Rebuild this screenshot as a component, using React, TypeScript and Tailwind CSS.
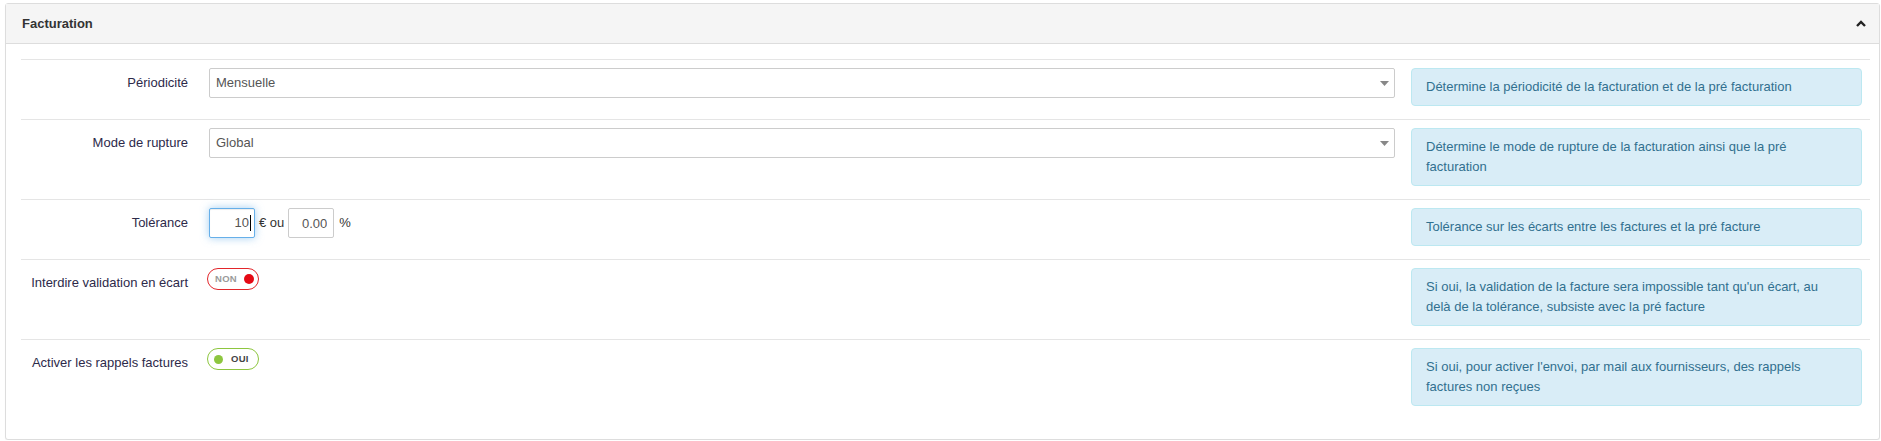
import React from "react"

type Row = {
    label: string
    help: string
    control: React.ReactNode
}

const SelectBox = ({ value }: { value: string }) => {
    return (
        <div className="relative w-full">
            <select
                defaultValue={value}
                className="block w-full h-[30px] appearance-none rounded-[2px] border border-[#ccc] bg-white pl-[6px] pr-6 text-[13px] text-[#555] outline-none"
            >
                <option>{value}</option>
            </select>
            <svg
                className="pointer-events-none absolute right-[6px] top-[13px]"
                width="9"
                height="5"
                viewBox="0 0 9 5"
            >
                <path d="M0 0 L9 0 L4.5 5 Z" fill="#888" />
            </svg>
        </div>
    )
}

const Tolerance = () => {
    return (
        <div className="flex items-center h-[30px] text-[13px] text-[#333]">
            {/* champ actif avec le focus */}
            <div className="flex items-center justify-end w-[46px] h-[30px] rounded-[2px] border border-[#66afe9] bg-white pr-[3px] shadow-[inset_0_1px_1px_rgba(0,0,0,0.075),0_0_8px_rgba(102,175,233,0.6)]">
                <span className="text-[#555]">10</span>
                <span className="ml-px inline-block w-px h-[16px] bg-black" />
            </div>
            <span className="ml-[4px] mr-[4px]">€ ou</span>
            <input
                type="text"
                readOnly
                value="0.00"
                className="w-[46px] h-[30px] rounded-[2px] border border-[#ccc] bg-white px-[6px] text-right text-[13px] text-[#555] outline-none"
            />
            <span className="ml-[5px]">%</span>
        </div>
    )
}

const Toggle = ({ on }: { on: boolean }) => {
    if (on) {
        return (
            <div className="ml-[-2px] flex items-center w-[52px] h-[22px] rounded-full border border-[#8dc63f] bg-white pl-[6px]">
                <span className="inline-block w-[9px] h-[9px] rounded-full bg-[#8dc63f]" />
                <span className="ml-[8px] text-[9.5px] font-bold text-[#444] tracking-[0.3px]">OUI</span>
            </div>
        )
    }
    return (
        <div className="ml-[-2px] flex items-center justify-end w-[52px] h-[22px] rounded-full border border-[#e2262b] bg-white pr-[4px]">
            <span className="text-[9.5px] font-bold text-[#9a9a9a] tracking-[0.3px]">NON</span>
            <span className="ml-[7px] inline-block w-[10px] h-[10px] rounded-full bg-[#e50914]" />
        </div>
    )
}

const rows: Row[] = [
    {
        label: "Périodicité",
        help: "Détermine la périodicité de la facturation et de la pré facturation",
        control: <SelectBox value="Mensuelle" />,
    },
    {
        label: "Mode de rupture",
        help: "Détermine le mode de rupture de la facturation ainsi que la pré facturation",
        control: <SelectBox value="Global" />,
    },
    {
        label: "Tolérance",
        help: "Tolérance sur les écarts entre les factures et la pré facture",
        control: <Tolerance />,
    },
    {
        label: "Interdire validation en écart",
        help: "Si oui, la validation de la facture sera impossible tant qu'un écart, au delà de la tolérance, subsiste avec la pré facture",
        control: <Toggle on={false} />,
    },
    {
        label: "Activer les rappels factures",
        help: "Si oui, pour activer l'envoi, par mail aux fournisseurs, des rappels factures non reçues",
        control: <Toggle on={true} />,
    },
]

const App = () => {
    return (
        <div className="pt-[3px] pl-[5px] pr-[1px] bg-white font-['Liberation_Sans',Arial,sans-serif]">
            <div className="rounded-[3px] border border-[#ddd] bg-white shadow-[0_1px_1px_rgba(0,0,0,0.05)]">
                <div className="flex h-[40px] items-center justify-between border-b border-[#ddd] bg-[#f5f5f5] pl-[16px] pr-[13px]">
                    <h3 className="text-[13px] font-bold text-[#333]">Facturation</h3>
                    <svg width="10" height="7" viewBox="0 0 10 7">
                        <polyline
                            points="1,6 5,2 9,6"
                            fill="none"
                            stroke="#222"
                            strokeWidth="2.4"
                        />
                    </svg>
                </div>

                <div className="pt-[15px] pb-[20px] pl-[15px] pr-[9px]">
                    {rows.map((row) => (
                        <div
                            key={row.label}
                            className="flex items-start border-t border-[#e5e5e5] pt-[8px] pb-[13px]"
                        >
                            <label className="w-[167px] h-[30px] flex items-center justify-end text-right text-[13px] text-[#2d2a4a] whitespace-nowrap">
                                {row.label}
                            </label>
                            <div className="ml-[21px] flex-1 min-w-0">{row.control}</div>
                            <div className="ml-[16px] mr-[8px] w-[451px] rounded-[4px] border border-[#bce8f1] bg-[#d9edf7] pl-[14px] pr-[17px] py-[8px] text-[13px] leading-[20px] text-[#31708f]">
                                {row.help}
                            </div>
                        </div>
                    ))}
                </div>
            </div>
        </div>
    )
}

export default App
